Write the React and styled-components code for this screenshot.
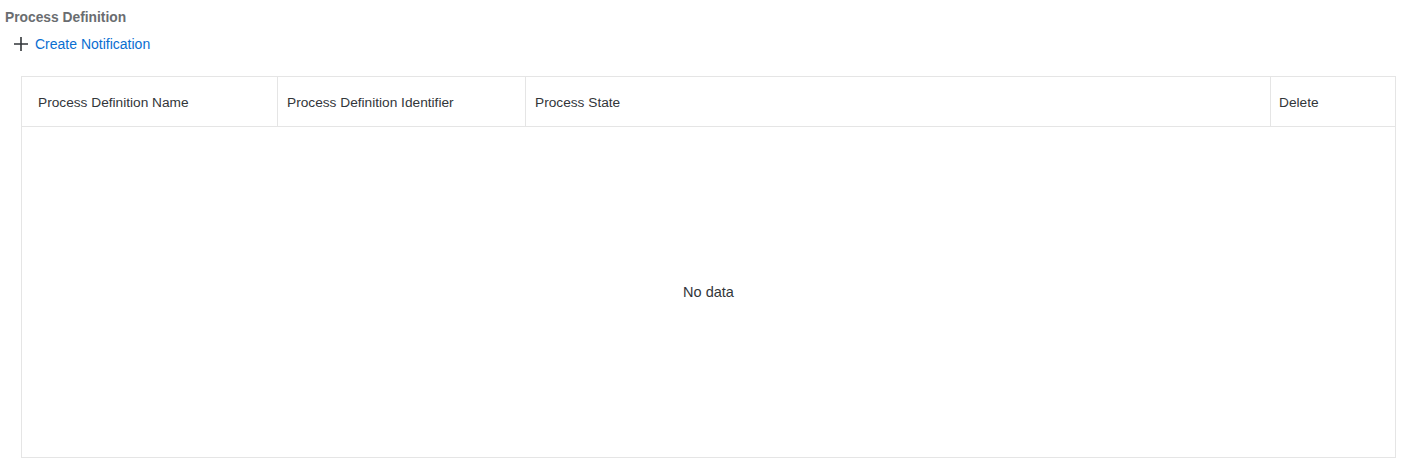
import React from "react";
import styled, { createGlobalStyle } from "styled-components";

const GlobalStyle = createGlobalStyle`
  body {
    margin: 0;
    background: #ffffff;
    font-family: "Liberation Sans", Arial, sans-serif;
    color: #32363a;
  }
`;

const Page = styled.div`
  display: flex;
  flex-direction: column;
  padding: 10px 18px 0 5px;
`;

const Title = styled.h2`
  margin: 0;
  font-size: 13.8px;
  font-weight: bold;
  line-height: 16px;
  color: #6a6d70;
`;

const CreateButton = styled.button`
  display: flex;
  align-items: center;
  gap: 7px;
  align-self: flex-start;
  margin: 10px 0 0 9px;
  padding: 0;
  border: none;
  background: none;
  font-family: inherit;
  font-size: 14px;
  line-height: 16px;
  color: #0a6ed1;
  cursor: pointer;
`;

const TableWrap = styled.div`
  margin: 24px 0 0 16px;
  border: 1px solid #e5e5e5;
  height: 380px;
  display: flex;
  flex-direction: column;
`;

const HeaderRow = styled.div`
  display: grid;
  grid-template-columns: 255px 248px 745px 1fr;
  height: 49px;
  border-bottom: 1px solid #e5e5e5;
`;

const HeaderCell = styled.div`
  display: flex;
  align-items: center;
  padding: 1px 0 0 ${p => p.$pad}px;
  font-size: 13.7px;
  color: #32363a;
  border-left: ${p => (p.$first ? "none" : "1px solid #e5e5e5")};
`;

const Body = styled.div`
  flex: 1;
  display: flex;
  align-items: center;
  justify-content: center;
  font-size: 14.5px;
  color: #32363a;
`;

const PlusIcon = () => (
  <svg width="14" height="14" viewBox="0 0 14 14" aria-hidden="true">
    <path d="M7 0v14M0 7h14" stroke="#32363a" strokeWidth="1.6" />
  </svg>
);

const columns = [
  { label: "Process Definition Name", pad: 16 },
  { label: "Process Definition Identifier", pad: 9 },
  { label: "Process State", pad: 9 },
  { label: "Delete", pad: 8 },
];

export default function App() {
  return (
    <>
      <GlobalStyle />
      <Page>
        <Title>Process Definition</Title>
        <CreateButton>
          <PlusIcon />
          Create Notification
        </CreateButton>
        <TableWrap>
          <HeaderRow>
            {columns.map((c, i) => (
              <HeaderCell key={c.label} $pad={c.pad} $first={i === 0}>
                {c.label}
              </HeaderCell>
            ))}
          </HeaderRow>
          <Body>No data</Body>
        </TableWrap>
      </Page>
    </>
  );
}
